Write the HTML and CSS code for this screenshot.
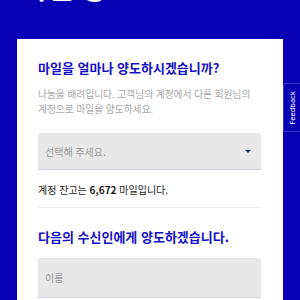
FILE: index.html
```html
<!DOCTYPE html>
<html lang="ko">
<head>
<meta charset="utf-8">
<link rel="stylesheet" href="styles.css">
</head>
<body>
<header class="hero">
  <h1 class="hero-title">마일 양도</h1>
</header>
<main class="card">
  <h2 class="section-title">마일을 얼마나 양도하시겠습니까?</h2>
  <p class="desc">나눔을 배려입니다. 고객님의 계정에서 다른 회원님의 계정으로 마일을 양도하세요.</p>
  <div class="field select">
    <span class="placeholder">선택해 주세요.</span>
    <span class="caret"></span>
  </div>
  <p class="balance">계정 잔고는 <b>6,672</b> 마일입니다.</p>
  <hr class="divider">
  <h2 class="section-title second">다음의 수신인에게 양도하겠습니다.</h2>
  <div class="field input">
    <span class="placeholder">이름</span>
  </div>
</main>
<a class="feedback"><span>Feedback</span></a>
</body>
</html>
```

FILE: styles.css
```css
html, body {
  margin: 0;
  padding: 0;
  background: #0800b4;
  overflow: hidden;
  font-family: "Noto Sans CJK KR", "Noto Sans", sans-serif;
}
.hero {
  height: 39px;
  padding-left: 22px;
  overflow: hidden;
}
.hero-title {
  margin: -27.5px 0 0;
  font-size: 28px;
  line-height: 28px;
  font-weight: 700;
  color: #fff;
}
.card {
  margin: 0 17px;
  background: #fff;
  padding: 20px 22px 40px 21px;
  min-height: 300px;
}
.section-title {
  margin: 0;
  font-size: 13px;
  line-height: 18px;
  font-weight: 700;
  color: #1410c4;
}
.desc {
  margin: 9.5px 0 0;
  font-size: 9.7px;
  line-height: 15px;
  color: #a6a6a6;
  word-break: break-all;
}
.field {
  background: #e8e8e8;
  border-radius: 3px 3px 0 0;
  border-bottom: 1px solid #c7cde0;
  display: flex;
  align-items: center;
  padding: 0 7px;
  box-sizing: border-box;
}
.select {
  margin-top: 16.5px;
  height: 37px;
  justify-content: space-between;
}
.placeholder {
  font-size: 10px;
  color: #9a9a9a;
}
.caret {
  width: 0;
  height: 0;
  border-left: 3.5px solid transparent;
  border-right: 3.5px solid transparent;
  border-top: 3.5px solid #2c3a6a;
  margin-right: 3px;
}
.balance {
  margin: 13px 0 0;
  font-size: 10px;
  line-height: 14px;
  color: #1a1a1a;
}
.balance b {
  font-weight: 700;
}
.divider {
  margin: 10px 0 0;
  border: 0;
  border-top: 1px solid #ececec;
}
.second {
  margin-top: 19.5px;
}
.input {
  margin-top: 12px;
  height: 40px;
}
.feedback {
  position: fixed;
  right: 0;
  top: 83px;
  width: 17px;
  height: 49px;
  background: #0800b4;
  border: 1px solid #3a3ad0;
  border-right: 0;
  border-radius: 3px 0 0 3px;
  box-sizing: border-box;
  display: flex;
  align-items: center;
  justify-content: center;
}
.feedback span {
  transform: rotate(-90deg);
  color: #fff;
  font-family: "Noto Sans", sans-serif;
  font-size: 7.5px;
  white-space: nowrap;
}
```
